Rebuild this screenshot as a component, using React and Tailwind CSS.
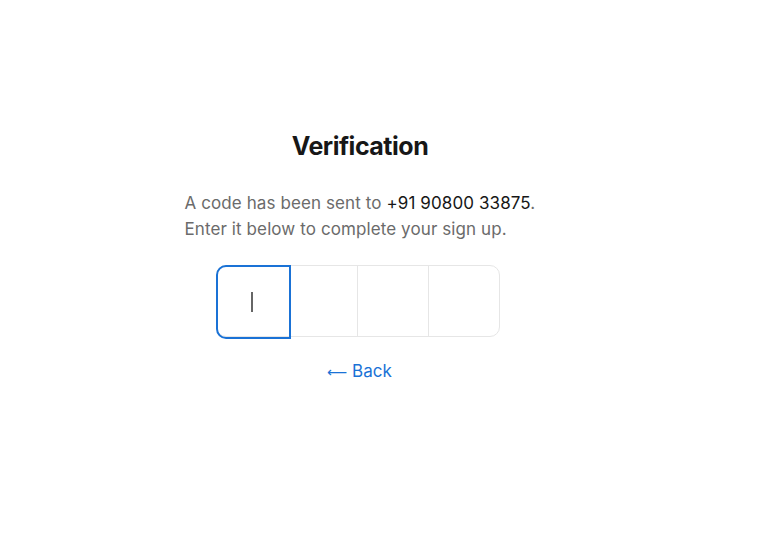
export default function App() {
  return (
    <div className="w-[760px] h-[541px] bg-white" style={{ fontFamily: 'Inter, "Noto Sans", sans-serif' }}>
      <div className="w-[717px] flex flex-col items-center pt-[128px]">
        <h1 className="text-[25px] leading-[36px] font-bold text-[#171717] tracking-[-0.5px] pl-[3px]">Verification</h1>
        <div className="mt-[26px] ml-[4px] w-[352px] text-[17px] leading-[26px] tracking-[0.1px] text-[#6b6b6b] whitespace-nowrap">
          <p>
            A code has been sent to <span className="text-[#171717]">+91 90800 33875</span>.
          </p>
          <p>Enter it below to complete your sign up.</p>
        </div>
        <div className="mt-[23px] mr-[2px] flex h-[72px] w-[284px] rounded-[10px] border border-[#e6e6e6]">
          <div className="relative -m-px flex w-[75px] h-[74px] items-center justify-center rounded-l-[10px] border-2 border-[#1a72d6]">
            <div className="w-[2px] h-[20px] bg-[#666] -ml-[2px]" />
          </div>
          <div className="w-[68px] border-r border-[#e6e6e6]" />
          <div className="w-[71px] border-r border-[#e6e6e6]" />
          <div className="flex-1" />
        </div>
        <a className="mt-[22px] text-[17px] leading-[24px] text-[#1a72d6] pl-[2px]">
          <span style={{ fontFamily: '"DejaVu Sans", sans-serif' }} className="text-[14px]">⟵</span> Back
        </a>
      </div>
    </div>
  );
}
